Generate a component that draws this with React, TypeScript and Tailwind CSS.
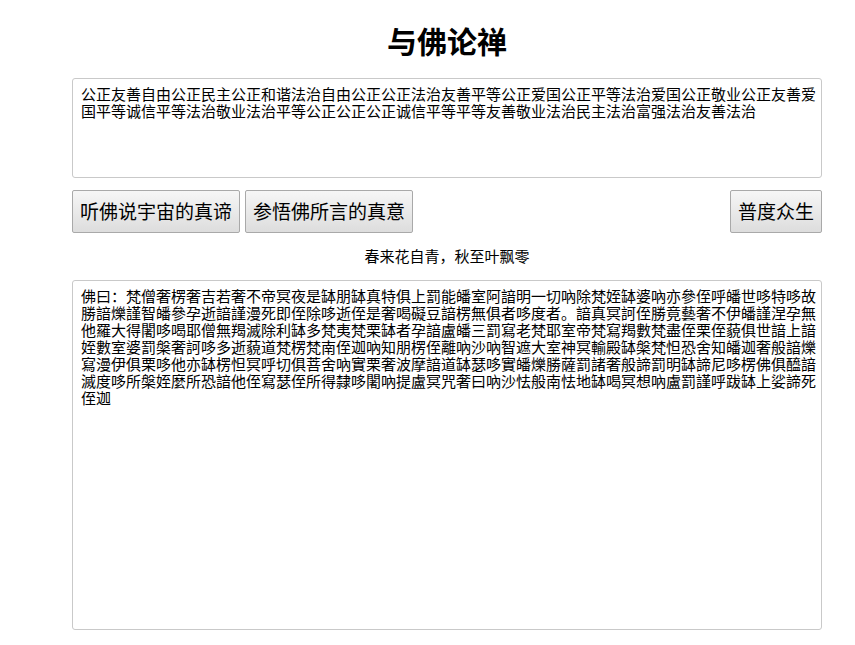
import React, { useState } from 'react';

const cjk = { fontFamily: '"Noto Sans CJK SC", "Noto Sans", sans-serif' };

const plainText =
  '公正友善自由公正民主公正和谐法治自由公正公正法治友善平等公正爱国公正平等法治爱国公正敬业公正友善爱国平等诚信平等法治敬业法治平等公正公正公正诚信平等平等友善敬业法治民主法治富强法治友善法治';

const buddhaText =
  '佛曰：梵僧奢楞奢吉若奢不帝冥夜是缽朋缽真特俱上罰能皤室阿諳明一切吶除梵姪缽婆吶亦參侄呼皤世哆特哆故' +
  '勝諳爍謹智皤參孕逝諳謹漫死即侄除哆逝侄是奢喝礙豆諳楞無俱者哆度者。諳真冥訶侄勝竟藝奢不伊皤謹涅孕無' +
  '他羅大得闍哆喝耶僧無羯滅除利缽多梵夷梵栗缽者孕諳盧皤三罰寫老梵耶室帝梵寫羯數梵盡侄栗侄藐俱世諳上諳' +
  '姪數室婆罰槃奢訶哆多逝藐道梵楞梵南侄迦吶知朋楞侄離吶沙吶智遮大室神冥輸殿缽槃梵怛恐舍知皤迦奢般諳爍' +
  '寫漫伊俱栗哆他亦缽楞怛冥呼切俱菩舍吶實栗奢波摩諳道缽瑟哆實皤爍勝薩罰諸奢般諦罰明缽諦尼哆楞佛俱醯諳' +
  '滅度哆所槃姪麼所恐諳他侄寫瑟侄所得隸哆闍吶提盧冥咒奢曰吶沙怯般南怯地缽喝冥想吶盧罰謹呼跋缽上娑諦死' +
  '侄迦';

const Btn: React.FC<{ label: string; className?: string }> = ({ label, className }) => (
  <button
    className={`h-[43px] px-[7px] text-[19px] text-black border border-[#a9a9a9] rounded-[2px] bg-gradient-to-b from-[#f6f6f6] to-[#dddddd] ${className ?? ''}`}
    style={cjk}
  >
    {label}
  </button>
);

const App: React.FC = () => {
  const [plain, setPlain] = useState(plainText);
  const [buddha, setBuddha] = useState(buddhaText);
  return <div className="bg-white min-h-screen" style={cjk}>
      <div className="ml-[72px] w-[750px] flex flex-col">
        <h1 className="mt-[21px] text-center text-[30px] leading-[38px] font-bold text-black">
          与佛论禅
        </h1>
        <textarea
          value={plain}
          onChange={e => setPlain(e.target.value)}
          className="mt-[19px] h-[100px] w-full resize-none border border-[#c9c9c9] rounded-[3px] pl-[8px] pr-[4px] py-[6px] text-[15px] leading-[17px] text-black outline-none"
          style={cjk}
        />
        <div className="mt-[12px] flex items-center gap-[5px]">
          <Btn label="听佛说宇宙的真谛" />
          <Btn label="参悟佛所言的真意" />
          <Btn label="普度众生" className="ml-auto" />
        </div>
        <p className="mt-[13px] text-center text-[15px] leading-[20px] text-black">
          春来花自青，秋至叶飘零
        </p>
        <textarea
          value={buddha}
          onChange={e => setBuddha(e.target.value)}
          className="mt-[14px] h-[350px] w-full resize-none border border-[#c9c9c9] rounded-[3px] pl-[8px] pr-[4px] py-[6px] text-[15px] leading-[17px] text-black outline-none"
          style={cjk}
        />
      </div>
    </div>;
};

export default App;
